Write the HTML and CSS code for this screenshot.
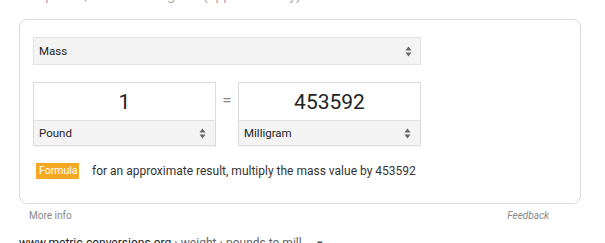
FILE: index.html
```html
<!DOCTYPE html>
<html>
<head>
<meta charset="utf-8">
<link rel="stylesheet" href="styles.css">
</head>
<body>
<div class="top"><span class="top-text">1 pound, 453592 milligram (approximately)</span></div>
<div class="card">
  <div class="select wide">
    <span>Mass</span>
    <svg class="arrows" width="7" height="11" viewBox="0 0 7 11"><path d="M3.5 0.5L6.5 4.5H0.5Z M3.5 10.5L0.5 6.5H6.5Z" fill="#666"/></svg>
  </div>
  <div class="conv">
    <div class="box">
      <div class="val">1</div>
      <div class="select unit">
        <span>Pound</span>
        <svg class="arrows" width="7" height="11" viewBox="0 0 7 11"><path d="M3.5 0.5L6.5 4.5H0.5Z M3.5 10.5L0.5 6.5H6.5Z" fill="#666"/></svg>
      </div>
    </div>
    <div class="eq">=</div>
    <div class="box">
      <div class="val">453592</div>
      <div class="select unit">
        <span>Milligram</span>
        <svg class="arrows" width="7" height="11" viewBox="0 0 7 11"><path d="M3.5 0.5L6.5 4.5H0.5Z M3.5 10.5L0.5 6.5H6.5Z" fill="#666"/></svg>
      </div>
    </div>
  </div>
  <div class="formula">
    <span class="badge">Formula</span>
    <span class="ftext">for an approximate result, multiply the mass value by 453592</span>
  </div>
</div>
<div class="foot">
  <span class="more">More info</span>
  <span class="feedback">Feedback</span>
</div>
<div class="url"><span class="dom">www.metric-conversions.org</span><span class="crumb"> › weight › pounds to mill</span><span class="caret">▾</span></div>
</body>
</html>
```
FILE: styles.css
```css
html, body { margin: 0; padding: 0; background: #fff; }
body { font-family: Roboto, Arial, sans-serif; color: #222; width: 605px; height: 243px; overflow: hidden; }
.top { height: 3px; overflow: hidden; display: flex; align-items: flex-end; padding-left: 34px; }
.top-text { font-size: 14px; line-height: 16px; color: #aaa; flex: none; }
.card {
  margin: 16px 0 0 19px;
  border: 1px solid #dadce0;
  border-radius: 8px;
  padding: 17px 0 0 13px;
  box-sizing: border-box;
  width: 562px;
  height: 185px;
}
.select {
  display: flex; align-items: center; justify-content: space-between;
  background: #f4f4f4;
  border: 1px solid #e2e2e2;
  box-sizing: border-box;
  font-size: 11.5px; color: #222;
  padding: 0 8px 0 5px;
}
.select.wide { width: 388px; height: 28px; }
.arrows { display: block; }
.conv { display: flex; align-items: flex-start; margin-top: 17px; }
.box {
  width: 183px; height: 64px;
  border: 1px solid #dcdcdc;
  box-sizing: border-box;
  display: flex; flex-direction: column;
  box-shadow: 0 1px 1px rgba(0,0,0,0.04);
}
.val { height: 37px; display: flex; align-items: center; justify-content: center; font-size: 21px; color: #222; }
.box .select.unit { flex: 1; border: none; border-top: 1px solid #e2e2e2; padding: 0 9px 0 5px; }
.eq { width: 22px; text-align: center; font-size: 17px; color: #888; line-height: 37px; }
.formula { display: flex; align-items: center; margin-top: 17px; padding-left: 3px; }
.badge { background: #f7a823; color: #fff; font-size: 10.5px; height: 16px; line-height: 16px; padding: 0 3px; width: 43px; box-sizing: border-box; text-align: center; }
.ftext { margin-left: 13px; font-size: 12px; color: #333; }
.foot { display: flex; justify-content: space-between; width: 520px; margin-left: 29px; margin-top: 5px; font-size: 10px; color: #888; line-height: 13px; }
.feedback { font-style: italic; }
.url { margin-top: 13px; margin-left: 19px; font-size: 12px; line-height: 16px; white-space: nowrap; }
.dom { color: #202124; }
.crumb { color: #5f6368; }
.caret { color: #555; font-size: 11px; margin-left: 15px; }
```
